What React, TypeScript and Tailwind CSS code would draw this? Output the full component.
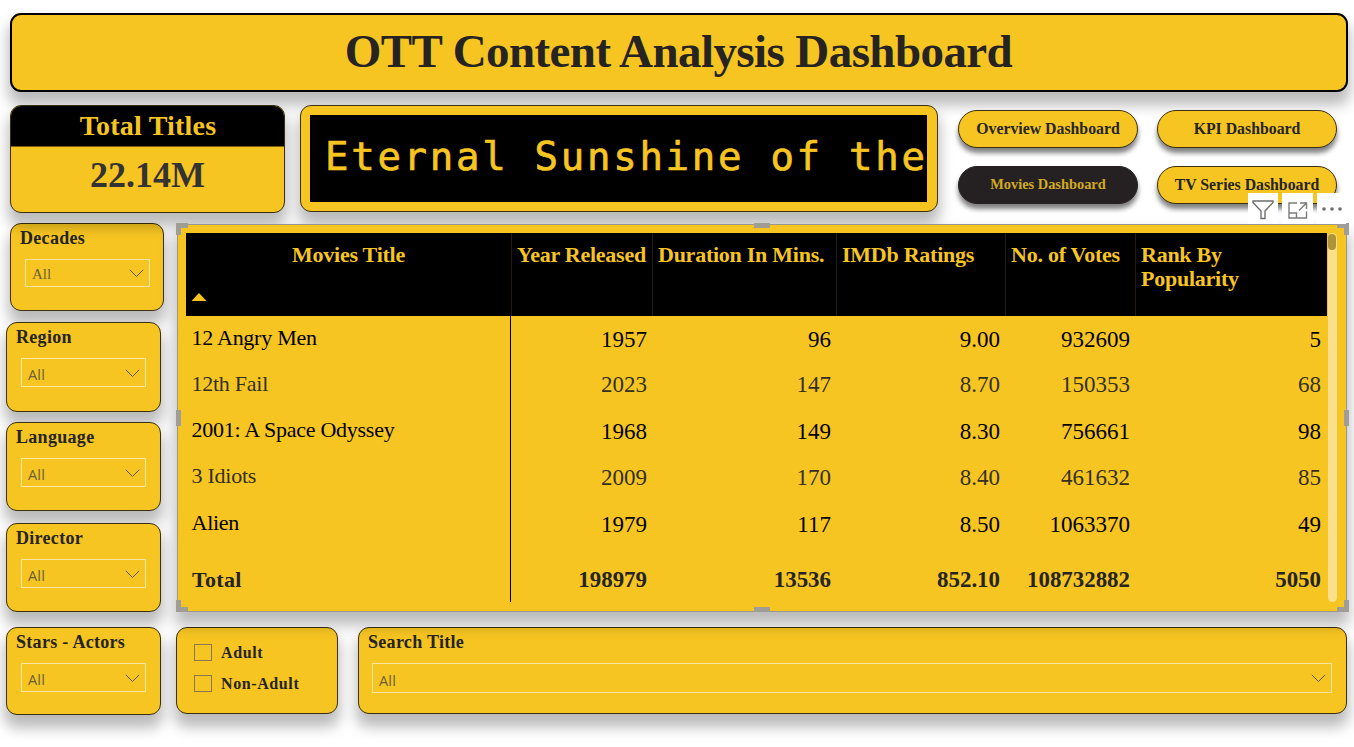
import React from "react";

const cardShadow = "shadow-[0_11px_14px_2px_rgba(0,0,0,0.27)]";
const card = `rounded-[11px] border border-[#3a3010] bg-[#f7c521] ${cardShadow}`;

function Chevron() {
  return (
    <svg className="mt-[1px]" width="15" height="9" viewBox="0 0 15 9" fill="none" stroke="#5d5640" strokeWidth="1">
      <path d="M0.8 0.8L7.5 7.5L14.2 0.8" />
    </svg>
  );
}

function Slicer({ title, className, boxClass, serif }: { title: string; className: string; boxClass: string; serif?: boolean }) {
  return (
    <section className={`${card} shrink-0 ${className}`}>
      <h2 className="pl-[9px] pt-[4px] text-[18px] leading-[20px] font-bold text-[#252423] whitespace-nowrap tracking-[0.3px]">{title}</h2>
      <div className={`flex items-center justify-between border border-[#fbe7a4] pl-[6px] pr-[5px] ${boxClass}`}>
        <span
          className={
            serif
              ? "text-[15px] leading-[17px] text-[#6b6039] pt-[3px]"
              : "font-['Open_Sans',sans-serif] text-[14.5px] leading-[17px] tracking-[0.2px] text-[#6b6039] pt-[4px]"
          }
        >
          All
        </span>
        <Chevron />
      </div>
    </section>
  );
}

const grid = "grid grid-cols-[325px_141px_184px_169px_130px_192px]";

const rows = [
  { title: "12 Angry Men", cells: ["1957", "96", "9.00", "932609", "5"] },
  { title: "12th Fail", cells: ["2023", "147", "8.70", "150353", "68"] },
  { title: "2001: A Space Odyssey", cells: ["1968", "149", "8.30", "756661", "98"] },
  { title: "3 Idiots", cells: ["2009", "170", "8.40", "461632", "85"] },
  { title: "Alien", cells: ["1979", "117", "8.50", "1063370", "49"] },
];
const rowHeights = ["h-[46px]", "h-[46px]", "h-[46px]", "h-[47px]", "h-[56px]"];

const headers = ["Year Released", "Duration In Mins.", "IMDb Ratings", "No. of Votes", "Rank By Popularity"];

function MoviesTable() {
  return (
    <section className={`relative z-10 flex h-[388px] w-[1170px] border border-[#9a978c] bg-[#f7c521] pl-[8px] pt-[8px] ${cardShadow}`}>
      <div className="w-[1141px]">
        <div className={`${grid} h-[83px] bg-black text-[22px] leading-[24px] font-bold tracking-[-0.25px] text-[#f7c521]`}>
          <div className="flex flex-col justify-between pt-[10px] pb-[15px]">
            <span className="text-center">Movies Title</span>
            <svg className="ml-[5px]" width="16" height="8" viewBox="0 0 16 8" fill="#f7c521">
              <path d="M8 0L15.5 8H0.5Z" />
            </svg>
          </div>
          {headers.map((h) => (
            <div key={h} className="border-l border-[#231c06] pl-[5px] pt-[10px]">
              <span className={h.startsWith("Rank") ? "block w-[110px]" : "whitespace-nowrap"}>{h}</span>
            </div>
          ))}
        </div>
        {rows.map((r, i) => (
          <div key={r.title} className={`${grid} ${rowHeights[i]} ${i % 2 ? "text-[#33301f]" : "text-black"}`}>
            <div className="border-r border-black pl-[5.5px] pt-[9px] text-[22px] leading-[25px] tracking-[-0.26px]">{r.title}</div>
            {r.cells.map((c, j) => (
              <div key={j} className={`${j === 4 ? "pr-[6px]" : "pr-[5px]"} ${i === 1 ? "pt-[10px]" : "pt-[11px]"} text-right text-[23px] leading-[25px]`}>{c}</div>
            ))}
          </div>
        ))}
        <div className={`${grid} h-[45px] font-bold text-[#252423]`}>
          <div className="border-r border-black pl-[6px] pt-[10px] text-[22px] leading-[25px] tracking-[0.3px]">Total</div>
          {["198979", "13536", "852.10", "108732882", "5050"].map((c, j) => (
            <div key={c} className={`${j === 4 ? "pr-[6px]" : "pr-[5px]"} pt-[10px] text-right text-[22.900px] leading-[25px]`}>{c}</div>
          ))}
        </div>
      </div>
      <div className="ml-[1px] h-[369px] w-[9px] rounded-full bg-[#fbe08b]">
        <div className="mt-[1px] h-[16px] w-[8px] rounded-full bg-[#ae933a]" />
      </div>

      <span className="absolute -left-[2px] -top-[2px] h-[12px] w-[12px] border-l-[5px] border-t-[5px] border-[#a09d97]" />
      <span className="absolute -right-[3px] -top-[2px] h-[12px] w-[12px] border-r-[5px] border-t-[5px] border-[#a09d97]" />
      <span className="absolute -left-[2px] -bottom-[1px] h-[12px] w-[12px] border-l-[5px] border-b-[5px] border-[#a09d97]" />
      <span className="absolute -right-[3px] -bottom-[1px] h-[12px] w-[12px] border-r-[5px] border-b-[5px] border-[#a09d97]" />
      <span className="absolute left-[576px] -top-[2px] h-[5px] w-[16px] bg-[#a09d97]" />
      <span className="absolute left-[576px] -bottom-[1px] h-[5px] w-[16px] bg-[#a09d97]" />
      <span className="absolute -left-[2px] top-[185px] h-[16px] w-[5px] bg-[#a09d97]" />
      <span className="absolute -right-[3px] top-[185px] h-[16px] w-[5px] bg-[#a09d97]" />

      <div className="absolute left-[1070px] -top-[32px] flex h-[31px] gap-[4px]">
        <div className="flex w-[30px] justify-center bg-white pt-[7px]">
          <svg width="22" height="20" viewBox="0 0 22 20" fill="none" stroke="#6f6d6a" strokeWidth="1.4">
            <path d="M1 1H21V2.5L13 11V18.5H9V11L1 2.5Z" />
          </svg>
        </div>
        <div className="flex w-[31px] justify-center bg-white pt-[9px]">
          <svg width="20" height="17" viewBox="0 0 20 17" fill="none" stroke="#7d7b78" strokeWidth="1.4">
            <path d="M9 1H1V16H18.5V9.5M1 11H8.500V16M12 1H18.500V7M18.500 1L11 8.500" />
          </svg>
        </div>
        <div className="flex w-[29px] justify-center bg-white pt-[14px]">
          <svg width="20" height="4" viewBox="0 0 20 4" fill="#6f6d6a">
            <circle cx="2" cy="2" r="1.800" />
            <circle cx="10" cy="2" r="1.800" />
            <circle cx="18" cy="2" r="1.800" />
          </svg>
        </div>
      </div>
    </section>
  );
}

function NavButton({ label, active }: { label: string; active?: boolean }) {
  return (
    <button
      className={`flex h-[38px] w-[180px] items-center justify-center whitespace-nowrap rounded-full border pb-[1px] font-bold shadow-[0_5px_5px_rgba(0,0,0,0.5)] ${
        active ? "border-[#252122] bg-[#252122] text-[14.400px] text-[#d3ab20]" : "border-[#3a3010] bg-[#f7c521] text-[15.800px] text-[#252423]"
      }`}
    >
      {label}
    </button>
  );
}

export default function App() {
  return (
    <main className="h-[747px] w-[1354px] overflow-hidden bg-white pt-[13px] font-['Liberation_Serif',serif]">
      <header className={`ml-[10px] flex h-[79px] w-[1338px] items-center justify-center rounded-[11px] border-2 border-black bg-[#f7c521] pb-[3px] ${cardShadow}`}>
        <h1 className="-ml-[1px] whitespace-nowrap text-[47px] font-bold tracking-[-0.58px] text-[#252423]">OTT Content Analysis Dashboard</h1>
      </header>

      <div className="relative z-10 flex h-[132px] pl-[10px] pt-[13px]">
        <section className={`${card} h-[108px] w-[275px] overflow-hidden text-center`}>
          <h2 className="h-[41px] border-b border-[#7a6010] bg-black text-[28px] leading-[40px] font-bold tracking-[0.2px] pl-[1px] text-[#f7c521]">Total Titles</h2>
          <p className="text-[36px] leading-[57px] font-bold text-[#333333]">22.14M</p>
        </section>
        <section className={`${card} ml-[15px] h-[107px] w-[638px] p-[9px]`}>
          <div className="h-[87px] w-[617px] overflow-hidden whitespace-pre bg-black pl-[15px] font-['DejaVu_Sans_Mono',monospace] text-[39px] leading-[84px] tracking-[2.720px] text-[#f7c521] [-webkit-text-stroke:0.7px_#f7c521]">
            Eternal Sunshine of the
          </div>
        </section>
        <nav className="ml-[20px] mt-[5px] grid h-[95px] grid-cols-[180px_180px] content-start gap-x-[19px] gap-y-[18px]">
          <NavButton label="Overview Dashboard" />
          <NavButton label="KPI Dashboard" />
          <NavButton label="Movies Dashboard" active />
          <NavButton label="TV Series Dashboard" />
        </nav>
      </div>

      <div className="flex">
        <aside className="flex w-[170px] flex-col pl-[6px]">
          <Slicer title="Decades" serif className="ml-[4px] h-[88px] w-[154px] -mt-px" boxClass="ml-[14px] mt-[11px] h-[28px] w-[125px]" />
          <Slicer title="Region" className="mt-[11px] h-[90px] w-[155px]" boxClass="ml-[14px] mt-[11px] h-[29px] w-[125px]" />
          <Slicer title="Language" className="mt-[10px] h-[89px] w-[155px]" boxClass="ml-[14px] mt-[11px] h-[29px] w-[125px]" />
          <Slicer title="Director" className="mt-[12px] h-[89px] w-[155px]" boxClass="ml-[14px] mt-[11px] h-[29px] w-[125px]" />
          <Slicer title="Stars - Actors" className="mt-[15px] h-[88px] w-[155px]" boxClass="ml-[14px] mt-[11px] h-[29px] w-[125px]" />
        </aside>

        <div className="relative z-20 pl-[7px]">
          <MoviesTable />
          <div className="mt-[15px] flex">
            <section className={`${card} -ml-px flex h-[87px] w-[162px] flex-col gap-[7px] pl-[17px] pt-[13px]`}>
              {["Adult", "Non-Adult"].map((label) => (
                <label key={label} className="flex h-[24px] items-center gap-[9px] text-[16px] font-bold tracking-[0.6px] text-[#252423]">
                  <span className="-mt-[1px] h-[17px] w-[18px] border border-[#8a7850]" />
                  {label}
                </label>
              ))}
            </section>
            <Slicer title="Search Title" className="ml-[20px] h-[87px] w-[989px]" boxClass="ml-[13px] mt-[11px] h-[30px] w-[960px]" />
          </div>
        </div>
      </div>
    </main>
  );
}
